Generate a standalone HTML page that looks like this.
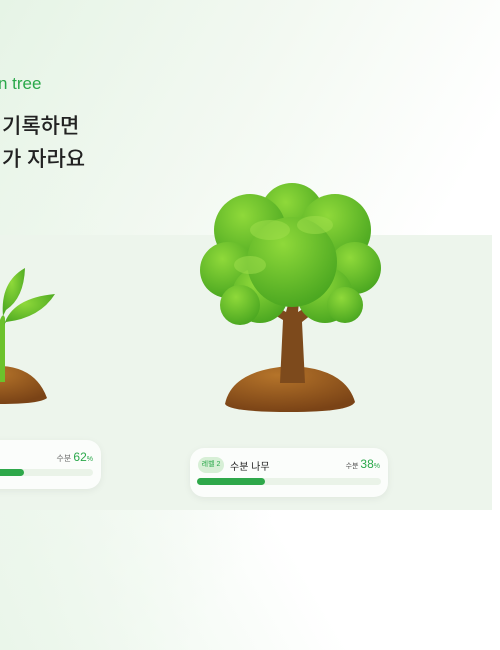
<!DOCTYPE html><html><head><meta charset="utf-8"><style>
body{margin:0;width:500px;height:650px;overflow:hidden;position:relative;font-family:"Liberation Sans","Noto Sans CJK KR",sans-serif;background:linear-gradient(120deg,#e6f4e6 0%,#f3f9f2 35%,#fff 65%,#fff 100%);}
.panel{position:absolute;left:0;top:235px;width:492px;height:275px;background:#edf5ec;}
.card{position:absolute;background:#fbfdfb;border-radius:14px;box-shadow:0 2px 8px rgba(0,0,0,.06);}
.bar{position:absolute;height:7px;border-radius:4px;background:#eaf3e8}
.fill{position:absolute;left:0;top:0;height:7px;border-radius:4px;background:#2ea84a}
</style></head><body>
<div style="position:absolute;left:0;top:0;width:500px;height:650px;background:linear-gradient(60deg,#eaf6ea 0%,rgba(255,255,255,0) 40%)"></div>
<div style="position:absolute;left:-2px;top:74px;color:#2aa84a;font-size:17px;font-weight:500">n tree</div>
<div style="position:absolute;left:2px;top:110px;color:#222;font-size:21px;line-height:33px;font-weight:500">기록하면<br>가 자라요</div>
<div class="panel"></div>
<svg style="position:absolute;left:0;top:0" width="500" height="650">
<defs>
<radialGradient id="soil" cx="40%" cy="20%" r="80%"><stop offset="0" stop-color="#b5742a"/><stop offset="1" stop-color="#7a4316"/></radialGradient>
<radialGradient id="leaf" cx="40%" cy="30%" r="70%"><stop offset="0" stop-color="#8fd93a"/><stop offset="1" stop-color="#4ca821"/></radialGradient>
</defs>
<!-- sprout -->
<path d="M-40 404 Q-30 366 2 366 Q36 368 47 398 Q40 404 0 404 Z" fill="url(#soil)"/>
<path d="M0 382 L0 320 Q3 312 5 318 L5 382 Z" fill="#6cc22c"/>
<path d="M4 325 Q12 298 55 294 Q40 318 6 322 Z" fill="url(#leaf)"/>
<path d="M3 316 Q0 282 25 268 Q24 298 6 310 Z" fill="url(#leaf)"/>
<!-- tree -->
<path d="M225 404 Q232 370 290 366 Q345 368 355 402 Q350 412 290 412 Q230 412 225 404 Z" fill="url(#soil)"/>
<path d="M280 383 L283 320 L250 300 L256 295 L286 312 L292 290 L300 292 L298 312 L325 295 L330 300 L302 322 L305 383 Z" fill="#7d4a1c"/>
<g fill="url(#leaf)">
<circle cx="292" cy="215" r="32"/><circle cx="250" cy="230" r="36"/><circle cx="335" cy="230" r="36"/>
<circle cx="228" cy="270" r="28"/><circle cx="355" cy="268" r="26"/><circle cx="260" cy="295" r="28"/>
<circle cx="325" cy="295" r="28"/><circle cx="292" cy="262" r="45"/><circle cx="345" cy="305" r="18"/><circle cx="240" cy="305" r="20"/>
</g>
<g fill="#a2e04d" opacity=".5"><ellipse cx="270" cy="230" rx="20" ry="10"/><ellipse cx="315" cy="225" rx="18" ry="9"/><ellipse cx="250" cy="265" rx="16" ry="9"/></g>
</svg>
<div class="card" style="left:-20px;top:440px;width:121px;height:49px">
<div style="position:absolute;right:8px;top:10px;font-size:8px;color:#666">수분 <span style="color:#2aa84a;font-size:12px">62</span><span style="color:#2aa84a;font-size:7px">%</span></div>
<div class="bar" style="left:14px;top:29px;width:99px"><div class="fill" style="width:30px"></div></div></div>
<div class="card" style="left:190px;top:448px;width:198px;height:49px">
<div style="position:absolute;left:8px;top:9px;width:26px;height:16px;border-radius:8px;background:#d7efd6;color:#2aa84a;font-size:7px;line-height:16px;text-align:center">레벨 2</div>
<div style="position:absolute;left:40px;top:10px;font-size:10px;color:#222">수분 나무</div>
<div style="position:absolute;right:8px;top:9px;font-size:7px;color:#555">수분 <span style="color:#2aa84a;font-size:12px">38</span><span style="color:#2aa84a;font-size:7px">%</span></div>
<div class="bar" style="left:7px;top:30px;width:184px"><div class="fill" style="width:68px"></div></div></div>
</body></html>
